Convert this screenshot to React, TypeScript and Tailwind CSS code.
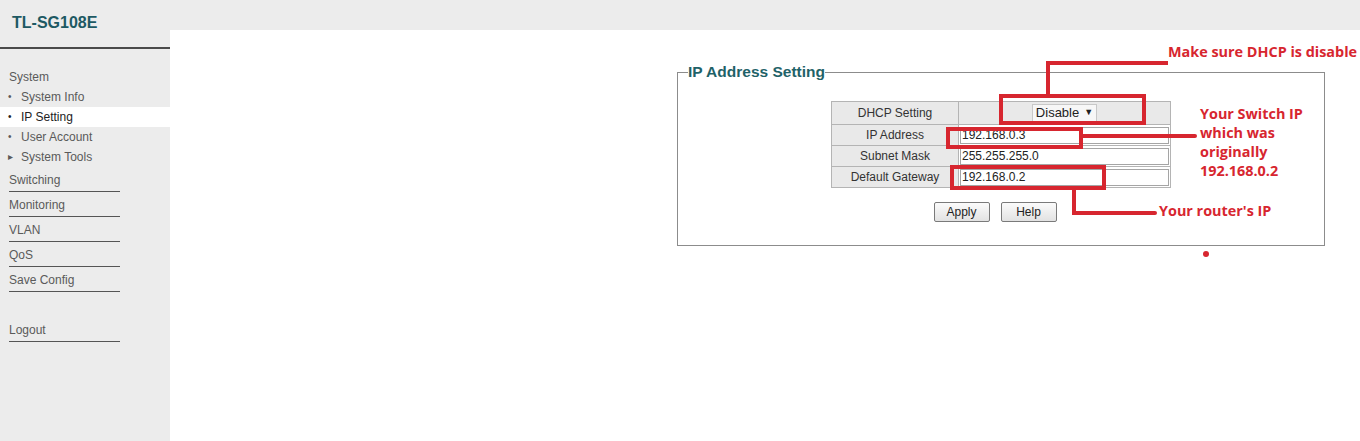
import { useState } from "react";

const subItems = [
  { name: "System Info", mark: "dot" },
  { name: "IP Setting", mark: "dot", active: true },
  { name: "User Account", mark: "dot" },
  { name: "System Tools", mark: "arrow" },
];

const sections = ["Switching", "Monitoring", "VLAN", "QoS", "Save Config"];

const rows = [
  { label: "IP Address", value: "192.168.0.3" },
  { label: "Subnet Mask", value: "255.255.255.0" },
  { label: "Default Gateway", value: "192.168.0.2" },
];

const Sidebar = () => (
  <div className="flex w-[170px] shrink-0 flex-col bg-[#ececec] text-[12px] text-[#5a5a5a]">
    <div className="h-[47px] pl-[12px] pt-[13px] text-[16px] font-bold leading-[20px] text-[#1d5963]">
      TL-SG108E
    </div>
    <div className="h-[2px] bg-[#4a4a4a]" />
    <div className="mt-[17px] flex h-[21px] items-center pl-[9px]">System</div>
    {subItems.map((item) => (
      <div
        key={item.name}
        className={`flex h-[20px] items-center pl-[8px] ${item.active ? "bg-white text-[#222]" : ""}`}
      >
        <span className="w-[13px] text-[10px] leading-none">
          {item.mark === "dot" ? "•" : "▸"}
        </span>
        <span>{item.name}</span>
      </div>
    ))}
    {sections.map((s) => (
      <div key={s} className="ml-[9px] w-[111px] border-b border-[#555] pb-[3px] pt-[5px] leading-[16px]">
        {s}
      </div>
    ))}
    <div className="ml-[9px] mt-[25px] w-[111px] border-b border-[#555] pb-[3px] pt-[5px] leading-[16px]">
      Logout
    </div>
  </div>
);

const Annotations = () => {
  const red = "border-[#d7262f]";
  return (
    <div className="pointer-events-none font-['Open_Sans',sans-serif] text-[14.4px] font-bold text-[#d7262f]">
      {/* DHCP box + leader */}
      <div className={`absolute left-[999px] top-[94px] h-[31px] w-[147px] border-[4px] ${red}`} />
      <div className="absolute left-[1046px] top-[61px] h-[34px] w-[4px] bg-[#d7262f]" />
      <div className="absolute left-[1046px] top-[61px] h-[4px] w-[122px] bg-[#d7262f]" />
      <div className="absolute left-[1168px] top-[42px] leading-[20px]">Make sure DHCP is disable</div>

      {/* IP box + leader */}
      <div className={`absolute left-[946px] top-[127px] h-[22px] w-[137px] border-[4px] ${red}`} />
      <div className="absolute left-[1083px] top-[134px] h-[4px] w-[114px] rounded-r-full bg-[#d7262f]" />
      <div className="absolute left-[1200px] top-[104px] leading-[19px]">
        Your Switch IP
        <br />
        which was
        <br />
        originally
        <br />
        192.168.0.2
      </div>

      {/* Gateway box + leader */}
      <div className={`absolute left-[950px] top-[165px] h-[25px] w-[156px] border-[4px] ${red}`} />
      <div className="absolute left-[1072px] top-[189px] h-[26px] w-[4px] bg-[#d7262f]" />
      <div className="absolute left-[1072px] top-[211px] h-[4px] w-[85px] rounded-r-full bg-[#d7262f]" />
      <div className="absolute left-[1159px] top-[201px] leading-[20px]">Your router's IP</div>

      <div className="absolute left-[1203px] top-[251px] h-[6px] w-[6px] rounded-full bg-[#d7262f]" />
    </div>
  );
};

export default function App() {
  const [dhcp] = useState("Disable");
  return (
    <div className="relative flex h-[441px] w-[1360px] overflow-hidden bg-white font-['Liberation_Sans',Arial,sans-serif]">
      <Sidebar />
      <div className="flex flex-1 flex-col">
        <div className="h-[30px] bg-[#ececec]" />
        <div className="flex-1 bg-white pl-[507px] pt-[33px]">
          <fieldset className="w-[648px] border border-[#8c8c8c] px-0 pb-[23px] pt-[20px]">
            <legend className="ml-[10px] text-[15.5px] font-bold leading-[18px] text-[#1f6268]">
              IP Address Setting
            </legend>
            <table className="mx-auto w-[340px] border-collapse text-[12px] text-[#333]">
              <tbody>
                <tr className="h-[23px]">
                  <td className="w-[127px] border border-[#b4b4b4] bg-[#e9e9e9] text-center">DHCP Setting</td>
                  <td className="border border-[#b4b4b4] bg-[#e9e9e9] text-center">
                    <span className="inline-flex h-[18px] w-[65px] items-center justify-center gap-[5px] border border-[#c8c8c8] bg-[#f7f7f7] text-[13px] text-[#222]">
                      {dhcp}
                      <span className="text-[9px]">▼</span>
                    </span>
                  </td>
                </tr>
                {rows.map((r) => (
                  <tr key={r.label} className="h-[21px]">
                    <td className="border border-[#b4b4b4] bg-[#e9e9e9] text-center">{r.label}</td>
                    <td className="border border-[#b4b4b4] bg-white p-[1px]">
                      <div className="flex h-[17px] items-center border border-[#a5a5a5] pl-[1px] text-[#222]">
                        {r.value}
                      </div>
                    </td>
                  </tr>
                ))}
              </tbody>
            </table>
            <div className="mt-[14px] flex justify-center gap-[11px] pr-[12px]">
              {["Apply", "Help"].map((b) => (
                <div
                  key={b}
                  className="flex h-[20px] w-[56px] items-center justify-center rounded-[2px] border border-[#7a7a7a] bg-gradient-to-b from-[#fbfbfb] to-[#e2e2e2] text-[12px] text-[#222]"
                >
                  {b}
                </div>
              ))}
            </div>
          </fieldset>
        </div>
      </div>
      <Annotations />
    </div>
  );
}
